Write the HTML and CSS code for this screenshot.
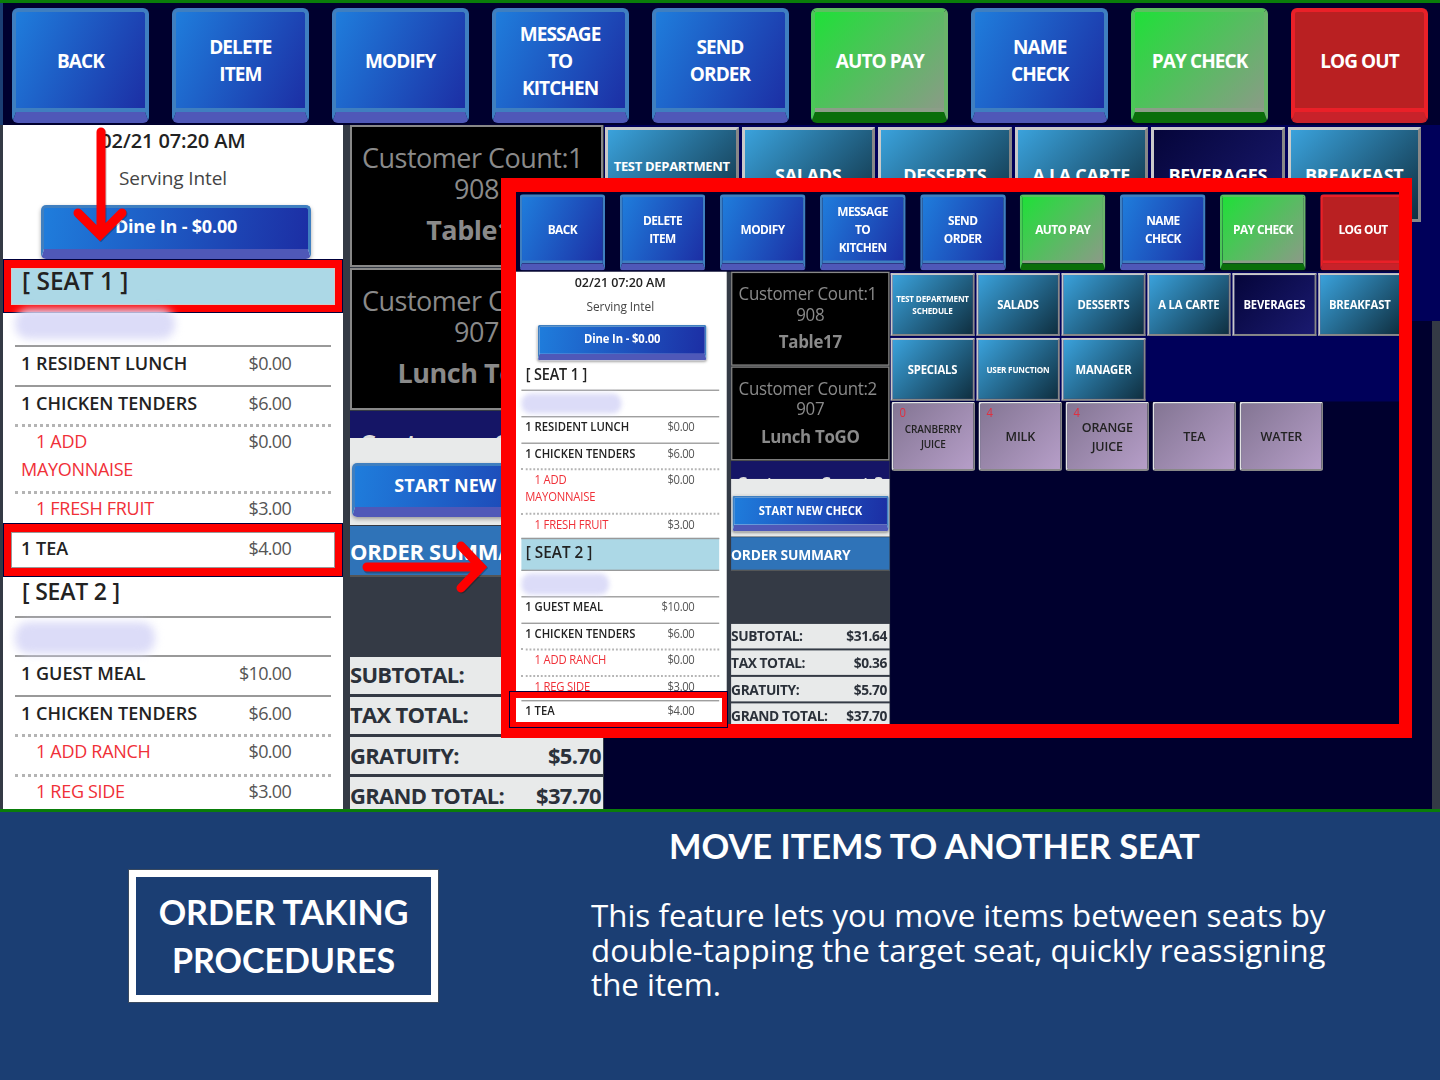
FILE: index.html
```html
<!DOCTYPE html>
<html lang="en">
<head>
<meta charset="utf-8">
<title>Move items to another seat</title>
<link rel="stylesheet" href="styles.css">
</head>
<body>
<div class="slide">
  <section class="screen">
    <div class="pos">
      <header class="nav">
        <button class="btn">BACK</button><button class="btn">DELETE<br>ITEM</button><button class="btn">MODIFY</button><button class="btn">MESSAGE<br>TO<br>KITCHEN</button><button class="btn">SEND<br>ORDER</button><button class="btn btn-green">AUTO PAY</button><button class="btn">NAME<br>CHECK</button><button class="btn btn-green">PAY CHECK</button><button class="btn btn-red">LOG OUT</button>
      </header>
      <div class="main">
        <aside class="ticket">
          <div class="date">02/21 07:20 AM</div>
          <div class="server">Serving Intel</div>
          <div class="dine">Dine In - $0.00</div>
          <div class="seat seat-lg"><div class="mark mark-seat"></div><span class="seat-text">[ SEAT 1 ]</span></div>
          <div class="guest guest-first"><span class="smudge"></span></div>
          <div class="row line"><span>1 RESIDENT LUNCH</span><span class="price">$0.00</span></div>
          <div class="row dots"><span>1 CHICKEN TENDERS</span><span class="price">$6.00</span></div>
          <div class="row mod mod-wrap dots"><span><span class="ind">1 ADD</span><br>MAYONNAISE</span><span class="price">$0.00</span></div>
          <div class="row mod line-none row-fresh"><span class="ind">1 FRESH FRUIT</span><span class="price">$3.00</span></div>
          <div class="row line-none"><div class="mark mark-tea"></div><span class="over">1 TEA</span><span class="price over">$4.00</span></div>
          <div class="seat"><span class="seat-text">[ SEAT 2 ]</span></div>
          <div class="guest guest-second"><span class="smudge smudge-2"></span></div>
          <div class="row line"><span>1 GUEST MEAL</span><span class="price">$10.00</span></div>
          <div class="row dots"><span>1 CHICKEN TENDERS</span><span class="price">$6.00</span></div>
          <div class="row mod dots"><span class="ind">1 ADD RANCH</span><span class="price">$0.00</span></div>
          <div class="row mod line-none"><span class="ind">1 REG SIDE</span><span class="price">$3.00</span></div>
        </aside>
        <div class="mid">
          <div class="card"><div class="card-count">Customer Count:1</div><div>908</div><div class="card-name">Table17</div></div>
          <div class="card"><div class="card-count">Customer Count:2</div><div>907</div><div class="card-name">Lunch ToGO</div></div>
          <div class="card-cut">Customer Count:3</div>
          <div class="start"><div class="start-btn">START NEW CHECK</div></div>
          <div class="summary">ORDER SUMMARY</div>
          <div class="totals">
            <div class="total"><span>SUBTOTAL:</span><span>$31.64</span></div>
            <div class="total"><span>TAX TOTAL:</span><span>$0.36</span></div>
            <div class="total"><span>GRATUITY:</span><span>$5.70</span></div>
            <div class="total total-last"><span>GRAND TOTAL:</span><span>$37.70</span></div>
          </div>
        </div>
        <div class="menu">
          <div class="cats">
            <div class="cat cat-small">TEST DEPARTMENT<br>SCHEDULE</div><div class="cat">SALADS</div><div class="cat">DESSERTS</div><div class="cat">A LA CARTE</div><div class="cat cat-on">BEVERAGES</div><div class="cat">BREAKFAST</div>
            <div class="cat">SPECIALS</div><div class="cat cat-small">USER FUNCTION</div><div class="cat">MANAGER</div>
          </div>
        </div>
      </div>
    </div>

    <div class="inset">
      <div class="pos pos-inset">
        <header class="nav">
          <button class="btn">BACK</button><button class="btn">DELETE<br>ITEM</button><button class="btn">MODIFY</button><button class="btn">MESSAGE<br>TO<br>KITCHEN</button><button class="btn">SEND<br>ORDER</button><button class="btn btn-green">AUTO PAY</button><button class="btn">NAME<br>CHECK</button><button class="btn btn-green">PAY CHECK</button><button class="btn btn-red">LOG OUT</button>
        </header>
        <div class="main">
          <aside class="ticket">
            <div class="date">02/21 07:20 AM</div>
            <div class="server">Serving Intel</div>
            <div class="dine">Dine In - $0.00</div>
            <div class="seat"><span class="seat-text">[ SEAT 1 ]</span></div>
            <div class="guest"><span class="smudge"></span></div>
            <div class="row line"><span>1 RESIDENT LUNCH</span><span class="price">$0.00</span></div>
            <div class="row dots"><span>1 CHICKEN TENDERS</span><span class="price">$6.00</span></div>
            <div class="row mod mod-wrap dots"><span><span class="ind">1 ADD</span><br>MAYONNAISE</span><span class="price">$0.00</span></div>
            <div class="row mod line-none row-fresh"><span class="ind">1 FRESH FRUIT</span><span class="price">$3.00</span></div>
            <div class="seat seat-on seat-lg"><span class="seat-text">[ SEAT 2 ]</span></div>
            <div class="guest"><span class="smudge smudge-2"></span></div>
            <div class="row line"><span>1 GUEST MEAL</span><span class="price">$10.00</span></div>
            <div class="row dots"><span>1 CHICKEN TENDERS</span><span class="price">$6.00</span></div>
            <div class="row mod dots"><span class="ind">1 ADD RANCH</span><span class="price">$0.00</span></div>
            <div class="row mod line-top"><span class="ind">1 REG SIDE</span><span class="price">$3.00</span></div>
            <div class="row line-none"><span>1 TEA</span><span class="price">$4.00</span></div>
          </aside>
          <div class="mid">
            <div class="card"><div class="card-count">Customer Count:1</div><div>908</div><div class="card-name">Table17</div></div>
            <div class="card"><div class="card-count">Customer Count:2</div><div>907</div><div class="card-name">Lunch ToGO</div></div>
            <div class="card-cut">Customer Count:3</div>
            <div class="start"><div class="start-btn">START NEW CHECK</div></div>
            <div class="summary">ORDER SUMMARY</div>
            <div class="totals">
              <div class="total"><span>SUBTOTAL:</span><span>$31.64</span></div>
              <div class="total"><span>TAX TOTAL:</span><span>$0.36</span></div>
              <div class="total"><span>GRATUITY:</span><span>$5.70</span></div>
              <div class="total total-last"><span>GRAND TOTAL:</span><span>$37.70</span></div>
            </div>
          </div>
          <div class="menu">
            <div class="cats">
              <div class="cat cat-small">TEST DEPARTMENT<br>SCHEDULE</div><div class="cat">SALADS</div><div class="cat">DESSERTS</div><div class="cat">A LA CARTE</div><div class="cat cat-on">BEVERAGES</div><div class="cat">BREAKFAST</div>
              <div class="cat">SPECIALS</div><div class="cat cat-small">USER FUNCTION</div><div class="cat">MANAGER</div>
            </div>
            <div class="items">
              <div class="item item-small"><span class="count">0</span>CRANBERRY<br>JUICE</div><div class="item"><span class="count">4</span>MILK</div><div class="item"><span class="count">4</span>ORANGE<br>JUICE</div><div class="item">TEA</div><div class="item">WATER</div>
            </div>
          </div>
        </div>
      </div>
    </div>
    <div class="inset-mark"></div>

    <svg class="arrows" viewBox="0 0 1440 812" width="1440" height="812" aria-hidden="true">
      <g class="arrow-shadow">
        <path d="M102 133V233M79 214L101 236L123 214"/>
        <path d="M368 569H479M462 547L482 568L462 589"/>
      </g>
      <g class="arrow">
        <path d="M101 132V232M78 213L100 235L122 213"/>
        <path d="M367 567H478M461 546L481 567L461 588"/>
      </g>
    </svg>
  </section>

  <footer class="caption">
    <div class="caption-left">
      <div class="badge">ORDER TAKING<br>PROCEDURES</div>
    </div>
    <div class="caption-right">
      <h1 class="title">MOVE ITEMS TO ANOTHER SEAT</h1>
      <p class="copy">This feature lets you move items between seats by double-tapping the target seat, quickly reassigning the item.</p>
    </div>
  </footer>
</div>
</body>
</html>
```

FILE: styles.css
```css
* { box-sizing: border-box; }
html, body { margin: 0; padding: 0; }
body { background: #1b3e73; font-family: "Open Sans", "Noto Sans", sans-serif; }
.slide { width: 1440px; height: 1080px; overflow: hidden; display: flex; flex-direction: column; background: #1b3e73; }

.screen { position: relative; height: 812px; flex: none; overflow: hidden; }

/* POS application */
.pos { width: 1440px; height: 812px; border-top: 3px solid #0a7d0a; border-bottom: 3px solid #0a7d0a; background: #343a45; display: flex; flex-direction: column; overflow: hidden; }
.nav { height: 122px; flex: none; background: #00002e; padding: 5px 12px 0 9px; display: flex; justify-content: space-between; border-left: 3px solid #1b3e73; }
.btn { width: 137px; height: 115px; padding: 0 0 2px; font: 700 19px/27px "Open Sans", sans-serif; letter-spacing: -0.9px; color: #fff; border: 4px solid #3f7fc0; border-bottom-width: 11px; border-bottom-color: #4f58b8; border-radius: 6px; background: linear-gradient(115deg, #1f7ddc, #1c2ea4); box-shadow: inset 0 -4px 0 #3f7fc0; text-align: center; }
.btn-green { background: linear-gradient(135deg, #1fe038, #8c9a88); border-color: #5cc060 #6ab46a #0a6e0a #4cc858; box-shadow: inset 0 -4px 0 #8c9e88; }
.btn-red { background: #b92022; border-color: #ea2028; border-bottom-color: #c8222a; box-shadow: inset 0 -4px 0 #ea2028; }

.main { flex: 1; display: flex; min-height: 0; padding-left: 3px; }

/* Ticket column */
.ticket { width: 340px; flex: none; background: #fff; color: #222; font-size: 18px; overflow: hidden; }
.date { height: 36px; text-align: center; font-weight: 600; font-size: 20px; line-height: 32px; letter-spacing: -0.1px; }
.server { height: 44px; text-align: center; font-size: 19px; line-height: 35px; letter-spacing: -0.1px; color: #444; }
.dine { margin: 0 32px 0 38px; height: 54px; padding-bottom: 8px; text-align: center; color: #fff; font-weight: 700; font-size: 18px; line-height: 36px; letter-spacing: -0.2px; border: 3px solid #3f7fc0; border-bottom: 10px solid #4f58b8; border-radius: 5px; background: linear-gradient(100deg, #1f7ddc, #1c2ea4); box-shadow: 0 2px 4px rgba(0,0,0,.35); }
.seat { position: relative; height: 46px; margin: 0 12px; padding: 0 7px; border-bottom: 2px solid #999; font-size: 23px; font-weight: 600; line-height: 38px; letter-spacing: -0.2px; color: #222; }
.seat-lg { font-size: 24.5px; line-height: 43px; letter-spacing: 0; }
.seat-text { position: relative; }
.seat-on { background: #acd8e6; border-top: 2px solid #999; height: 50px; margin-top: -2px; }
.guest { height: 40px; margin: 0 12px; padding-top: 4px; border-bottom: 2px solid #999; }
.guest-first { height: 42px; }
.guest-second { height: 39px; }
.smudge { display: block; width: 160px; height: 30px; border-radius: 14px; background: #dcdcf8; filter: blur(4px); }
.smudge-2 { width: 140px; height: 32px; }
.row { position: relative; display: flex; justify-content: space-between; height: 40px; margin: 0 12px; padding: 0 40px 0 6px; border-bottom: 2px solid #999; font-weight: 600; font-size: 18px; line-height: 32px; letter-spacing: 0; color: #222; }
.row.dots { border-bottom: 3px dotted #b4b4b4; }
.row.line-top { height: 37px; }
.row-fresh { height: 38px; }
.price { font-weight: 400; color: #555; letter-spacing: -0.7px; }
.mod { color: #f03038; font-weight: 400; line-height: 29px; letter-spacing: -0.3px; }
.mod .price { color: #555; }
.mod-wrap { height: 67px; line-height: 28px; }
.ind { padding-left: 15px; }
.over { position: relative; }

/* Red highlight boxes on the ticket */
.mark { position: absolute; left: -12px; right: -12px; border: 8px solid #fe0000; outline: 1px solid #00003c; outline-offset: -1px; }
.mark-seat { top: 0; height: 54px; background: #acd8e6; box-shadow: inset 0 0 0 1px #ccc; border-width: 9px 8px 8px; }
.mark-tea { top: -9px; height: 54px; background: #fff; box-shadow: inset 0 0 0 1px #999; border-width: 9px 8px; }

/* Middle column */
.mid { width: 253px; flex: none; margin-left: 7px; display: flex; flex-direction: column; }
.card { height: 142px; margin-bottom: 1px; border: 2px solid #888; background: #000; color: #8a8a8a; text-align: center; font-size: 27px; line-height: 31px; letter-spacing: -0.5px; padding-top: 15px; }
.card-count { padding-right: 8px; }
.card-name { margin-top: 10px; font-weight: 700; }
.card-cut { height: 27px; background: #151566; color: #ddd; text-align: center; font-weight: 700; font-size: 26px; line-height: 66px; overflow: hidden; }
.start { height: 87px; background: #e8eaea; padding: 25px 1px 0 2px; }
.start-btn { height: 54px; text-align: center; color: #fff; font-weight: 700; font-size: 18px; line-height: 38px; border: 3px solid #3f7fc0; border-bottom: 10px solid #4f58b8; border-radius: 5px; background: linear-gradient(100deg, #1f7ddc, #1c2ea4); box-shadow: 0 2px 4px rgba(0,0,0,.35); }
.summary { height: 51px; margin-top: 1px; background: #2f73b8; border-bottom: 2px solid #555; color: #fff; font-weight: 700; font-size: 22px; line-height: 50px; letter-spacing: -0.3px; }
.totals { margin-top: auto; display: flex; flex-direction: column; gap: 3px; }
.total { height: 37px; display: flex; justify-content: space-between; background: #e8eaea; color: #2b313a; font-weight: 700; font-size: 22px; line-height: 34px; letter-spacing: -0.7px; padding-right: 2px; }
.total-last { height: 32px; line-height: 37px; }
.total:nth-child(3) { line-height: 37px; }

/* Menu column */
.menu { flex: 1; min-width: 0; display: flex; flex-direction: column; margin-left: 1px; background: #00002e; border-right: 8px solid #343a45; }
.cats { height: 196px; flex: none; margin-right: -8px; padding: 2px 0 0 1px; background: #00005a; display: grid; grid-template-columns: repeat(6, 133.5px); grid-auto-rows: 95px; gap: 3px; align-content: start; }
.cat { display: flex; align-items: center; justify-content: center; text-align: center; color: #fff; font-weight: 700; font-size: 18px; letter-spacing: -0.3px; line-height: 20px; border: 3px solid #c9c9c9; border-right-color: #888; border-bottom-color: #888; background: linear-gradient(135deg, #3aa2dc, #0f2f40); }
.cat-small { font-size: 13px; line-height: 18px; letter-spacing: -0.3px; }
.cat-on { background: linear-gradient(135deg, #05053a, #1a1a70); }
.items { display: flex; gap: 5px; padding: 0 0 0 2px; }
.item { position: relative; width: 134px; height: 105px; display: flex; align-items: center; justify-content: center; text-align: center; border: 3px solid #e4e4e4; border-right-color: #888; border-bottom-color: #888; border-radius: 5px; background: linear-gradient(135deg, #837593, #b69ec8); color: #222; font-weight: 600; font-size: 20px; line-height: 29px; letter-spacing: -0.2px; }
.item-small { font-size: 16px; line-height: 22px; }
.count { position: absolute; top: 3px; left: 10px; color: #e03040; font-weight: 400; font-size: 18px; line-height: 20px; }

/* Magnified inset */
.inset { position: absolute; left: 501px; top: 178px; width: 911px; height: 560px; border: solid #fe0000; border-width: 14px 13px 14px 15px; overflow: hidden; background: #00002e; }
.pos-inset { position: absolute; left: -4.5px; top: -3.4px; transform: scale(0.626, 0.662); transform-origin: 0 0; }
.pos-inset .row { line-height: 28px; }
.pos-inset .mod-wrap { line-height: 27px; }
.pos-inset .row-fresh { height: 37px; }
.pos-inset .seat { line-height: 40px; }
.pos-inset .seat-on { line-height: 37px; }
.pos-inset .total { padding-right: 4px; }
.inset-mark { position: absolute; left: 510px; top: 692px; width: 217px; height: 35px; border: solid #fe0000; border-width: 6px 5px 5px 6px; box-shadow: 0 0 0 1px #00003c; }

.arrows { position: absolute; left: 0; top: 0; pointer-events: none; }
.arrow, .arrow-shadow { fill: none; stroke-width: 9px; stroke-linecap: round; stroke-linejoin: miter; }
.arrow { stroke: #fe0000; }
.arrow-shadow { stroke: rgba(0,0,0,.25); }

/* Caption */
.caption { flex: 1; display: flex; color: #fff; }
.caption-left { width: 591px; flex: none; padding: 58px 0 0 129px; }
.badge { width: 309px; height: 132px; border: 7px solid #fff; outline: 1px solid #3a4a60; font-family: Lato, sans-serif; font-weight: 700; font-size: 34px; line-height: 48px; text-align: center; padding-top: 11px; }
.caption-right { flex: 1; }
.title { margin: 12px 0 0; width: 687px; text-align: center; font-family: Lato, sans-serif; font-weight: 700; font-size: 34.4px; line-height: 44px; }
.copy { margin: 30px 0 0; width: 745px; font-size: 31.3px; line-height: 34.5px; }
```
